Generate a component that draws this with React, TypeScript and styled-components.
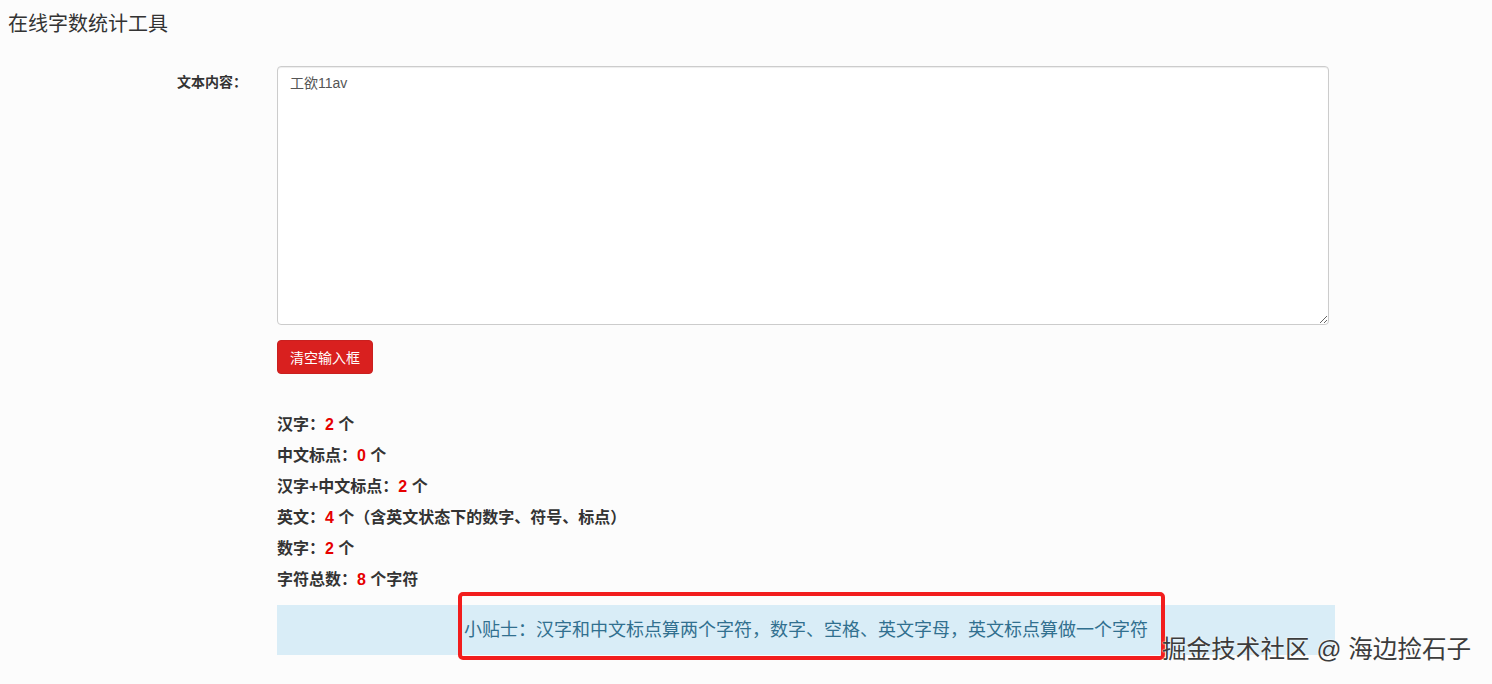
import { useState } from 'react'
import styled, { createGlobalStyle } from 'styled-components'

const GlobalStyle = createGlobalStyle`
  html, body {
    margin: 0;
    padding: 0;
    background: #fcfcfc;
    font-family: "Liberation Sans", "Noto Sans CJK SC", sans-serif;
    color: #333;
  }
`

const Page = styled.div`
  position: relative;
  width: 1492px;
  height: 684px;
  overflow: hidden;
`

const Title = styled.h1`
  margin: 0;
  padding: 10px 8px 0;
  font-size: 20px;
  line-height: 28px;
  font-weight: normal;
  color: #333;
`

const Form = styled.div`
  margin-top: 28px;
  display: grid;
  grid-template-columns: 277px 1058px;
`

const Label = styled.label`
  text-align: right;
  padding: 7px 30px 0 0;
  font-size: 14px;
  line-height: 18px;
  font-weight: bold;
  color: #333;
`

const Field = styled.div`
  display: flex;
  flex-direction: column;
  align-items: flex-start;
`

const TextArea = styled.textarea`
  box-sizing: border-box;
  width: 1052px;
  height: 259px;
  margin: 0;
  padding: 6px 12px;
  border: 1px solid #ccc;
  border-radius: 4px;
  background: #fff;
  box-shadow: inset 0 1px 1px rgba(0, 0, 0, 0.075);
  font-family: "Liberation Sans", "Noto Sans CJK SC", sans-serif;
  font-size: 14px;
  line-height: 20px;
  color: #555;
  outline: none;
`

const ClearButton = styled.button`
  margin-top: 15px;
  height: 34px;
  padding: 0 12px;
  border: 1px solid #c9201f;
  border-radius: 4px;
  background: #d9201f;
  color: #fff;
  font-family: "Liberation Sans", "Noto Sans CJK SC", sans-serif;
  font-size: 14px;
  cursor: pointer;
`

const Stats = styled.div`
  margin-top: 35px;
  display: flex;
  flex-direction: column;
`

const StatLine = styled.div`
  font-size: 16px;
  line-height: 31px;
  font-weight: bold;
  color: #333;
  white-space: nowrap;
`

const Num = styled.span`
  color: #e60000;
`

const Tip = styled.div`
  position: relative;
  box-sizing: border-box;
  width: 1058px;
  margin-top: 10px;
  padding: 15px;
  background: #d9edf7;
  color: #31708f;
  font-size: 18px;
  line-height: 20px;
  text-align: center;
`

const Highlight = styled.div`
  position: absolute;
  left: 181px;
  top: -13px;
  width: 707px;
  height: 68px;
  box-sizing: border-box;
  border: 4px solid #f21d1d;
  border-radius: 5px;
  pointer-events: none;
`

const Watermark = styled.div`
  position: absolute;
  left: 1162px;
  top: 634px;
  font-size: 24.6px;
  line-height: 32px;
  color: #3c3c3c;
  white-space: nowrap;
  text-shadow: 0 0 2px #fff, 0 0 1px #fff;
`

function count(text: string) {
  const han = (text.match(/[\u4e00-\u9fa5]/g) || []).length
  const cnPunct = (text.match(/[\u3000-\u303f\uff00-\uffef]/g) || []).length
  const en = (text.match(/[\x00-\xff]/g) || []).length
  const digits = (text.match(/[0-9]/g) || []).length
  return { han, cnPunct, en, digits, total: (han + cnPunct) * 2 + en }
}

export default function App() {
  const [text, setText] = useState('工欲11av')
  const c = count(text)

  return (
    <Page>
      <GlobalStyle />
      <Title>在线字数统计工具</Title>
      <Form>
        <Label htmlFor="content">文本内容：</Label>
        <Field>
          <TextArea id="content" value={text} onChange={e => setText(e.target.value)} />
          <ClearButton onClick={() => setText('')}>清空输入框</ClearButton>
          <Stats>
            <StatLine>汉字：<Num>{c.han}</Num> 个</StatLine>
            <StatLine>中文标点：<Num>{c.cnPunct}</Num> 个</StatLine>
            <StatLine>汉字+中文标点：<Num>{c.han + c.cnPunct}</Num> 个</StatLine>
            <StatLine>英文：<Num>{c.en}</Num> 个（含英文状态下的数字、符号、标点）</StatLine>
            <StatLine>数字：<Num>{c.digits}</Num> 个</StatLine>
            <StatLine>字符总数：<Num>{c.total}</Num> 个字符</StatLine>
          </Stats>
          <Tip>
            小贴士：汉字和中文标点算两个字符，数字、空格、英文字母，英文标点算做一个字符
            <Highlight />
          </Tip>
        </Field>
      </Form>
      <Watermark>掘金技术社区 @ 海边捡石子</Watermark>
    </Page>
  )
}
